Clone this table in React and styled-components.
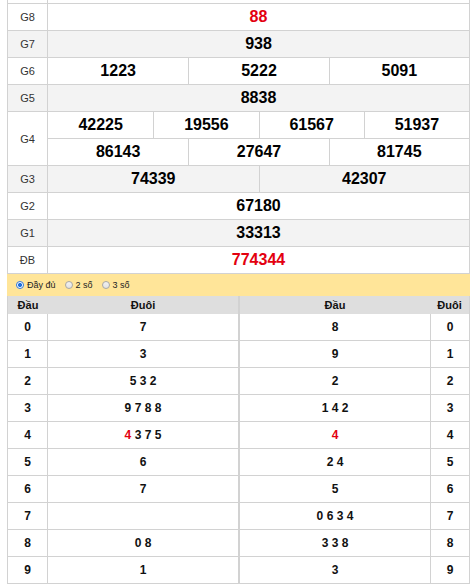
import React from 'react';
import styled, { createGlobalStyle } from 'styled-components';

const BORDER = '#d2d2d2';

const Global = createGlobalStyle`
  html, body { margin: 0; padding: 0; background: #fff; }
  body { font-family: "Liberation Sans", Arial, sans-serif; color: #000; }
`;

const Page = styled.div`
  margin-left: 7px;
  width: 463px;
`;

const Results = styled.div`
  border-left: 1px solid ${BORDER};
  border-right: 1px solid ${BORDER};
`;

const PrizeRow = styled.div`
  display: grid;
  grid-template-columns: 40px minmax(0, 1fr);
  background: ${(p) => (p.$alt ? '#f3f3f3' : '#fff')};
  border-bottom: 1px solid ${BORDER};
`;

const StubRow = styled(PrizeRow)`
  height: 3px;
`;

const Label = styled.div`
  border-right: 1px solid ${BORDER};
  display: flex;
  align-items: center;
  justify-content: center;
  font-size: 11px;
  color: #333;
`;

const Values = styled.div`
  display: flex;
  flex-direction: column;
`;

const Line = styled.div`
  display: grid;
  grid-template-columns: repeat(${(p) => p.$cols}, minmax(0, 1fr));
  & + & {
    border-top: 1px solid ${BORDER};
  }
`;

const Num = styled.div`
  height: 26px;
  display: flex;
  align-items: center;
  justify-content: center;
  font-size: 16px;
  font-weight: bold;
  color: ${(p) => (p.$red ? '#e3000f' : '#000')};
  & + & {
    border-left: 1px solid ${BORDER};
  }
`;

const Options = styled.div`
  height: 22px;
  background: #ffe599;
  display: flex;
  align-items: center;
  padding-left: 9px;
  gap: 9px;
`;

const Option = styled.label`
  display: flex;
  align-items: center;
  gap: 3px;
  font-size: 9px;
  color: #222;
`;

const Radio = styled.span`
  width: 8px;
  height: 8px;
  box-sizing: border-box;
  border-radius: 50%;
  border: 1px solid ${(p) => (p.$on ? '#2f78dd' : '#a8a8a8')};
  background: ${(p) =>
    p.$on
      ? 'radial-gradient(circle, #1f6fdc 0 1.8px, #ffffff 2.3px)'
      : 'linear-gradient(#f2f2f2, #e2e2e2)'};
`;

const Loto = styled.div`
  display: grid;
  grid-template-columns: 232px 231px;
`;

const Side = styled.div`
  border-left: 1px solid ${BORDER};
  border-right: 1px solid ${BORDER};
`;

const LotoHead = styled.div`
  display: grid;
  grid-template-columns: ${(p) => p.$cols};
  height: 18px;
  background: #dedede;
  font-size: 11px;
  font-weight: bold;
  color: #111;
`;

const HeadCell = styled.div`
  display: flex;
  align-items: center;
  justify-content: center;
`;

const LotoRow = styled.div`
  display: grid;
  grid-template-columns: ${(p) => p.$cols};
  height: 26px;
  border-bottom: 1px solid ${BORDER};
`;

const LotoCell = styled.div`
  display: flex;
  align-items: center;
  justify-content: center;
  font-size: 12px;
  font-weight: bold;
  color: #111;
  ${(p) => (p.$divider ? `border-${p.$divider}: 1px solid ${BORDER};` : '')}
`;

const DigitList = styled.span`
  white-space: pre;
`;

const Red = styled.span`
  color: #e3000f;
`;

const prizes = [
  { label: 'G8', lines: [['88']], red: true },
  { label: 'G7', lines: [['938']], alt: true },
  { label: 'G6', lines: [['1223', '5222', '5091']] },
  { label: 'G5', lines: [['8838']], alt: true },
  { label: 'G4', lines: [['42225', '19556', '61567', '51937'], ['86143', '27647', '81745']] },
  { label: 'G3', lines: [['74339', '42307']], alt: true },
  { label: 'G2', lines: [['67180']] },
  { label: 'G1', lines: [['33313']], alt: true },
  { label: 'ĐB', lines: [['774344']], red: true },
];

const left = [['7'], ['3'], ['5', '3', '2'], ['9', '7', '8', '8'], ['4*', '3', '7', '5'], ['6'], ['7'], [], ['0', '8'], ['1']];
const right = [['8'], ['9'], ['2'], ['1', '4', '2'], ['4*'], ['2', '4'], ['5'], ['0', '6', '3', '4'], ['3', '3', '8'], ['3']];

function Digits({ list }) {
  return (
    <DigitList>
      {list.map((d, i) => (
        <React.Fragment key={i}>
          {i > 0 ? ' ' : ''}
          {d.endsWith('*') ? <Red>{d[0]}</Red> : d}
        </React.Fragment>
      ))}
    </DigitList>
  );
}

const LEFT_COLS = '40px minmax(0, 1fr)';
const RIGHT_COLS = 'minmax(0, 1fr) 39px';

export default function App() {
  return (
    <>
      <Global />
      <Page>
        <Results>
          <StubRow>
            <Label />
            <div />
          </StubRow>
          {prizes.map((p) => (
            <PrizeRow key={p.label} $alt={p.alt}>
              <Label>{p.label}</Label>
              <Values>
                {p.lines.map((line, i) => (
                  <Line key={i} $cols={line.length}>
                    {line.map((n, j) => (
                      <Num key={j} $red={p.red}>{n}</Num>
                    ))}
                  </Line>
                ))}
              </Values>
            </PrizeRow>
          ))}
        </Results>
        <Options>
          <Option><Radio $on />Đầy đủ</Option>
          <Option><Radio />2 số</Option>
          <Option><Radio />3 số</Option>
        </Options>
        <Loto>
          <Side>
            <LotoHead $cols={LEFT_COLS}>
              <HeadCell>Đầu</HeadCell>
              <HeadCell>Đuôi</HeadCell>
            </LotoHead>
            {left.map((tails, i) => (
              <LotoRow key={i} $cols={LEFT_COLS}>
                <LotoCell $divider="right">{i}</LotoCell>
                <LotoCell><Digits list={tails} /></LotoCell>
              </LotoRow>
            ))}
          </Side>
          <Side>
            <LotoHead $cols={RIGHT_COLS}>
              <HeadCell>Đầu</HeadCell>
              <HeadCell>Đuôi</HeadCell>
            </LotoHead>
            {right.map((heads, i) => (
              <LotoRow key={i} $cols={RIGHT_COLS}>
                <LotoCell><Digits list={heads} /></LotoCell>
                <LotoCell $divider="left">{i}</LotoCell>
              </LotoRow>
            ))}
          </Side>
        </Loto>
      </Page>
    </>
  );
}
